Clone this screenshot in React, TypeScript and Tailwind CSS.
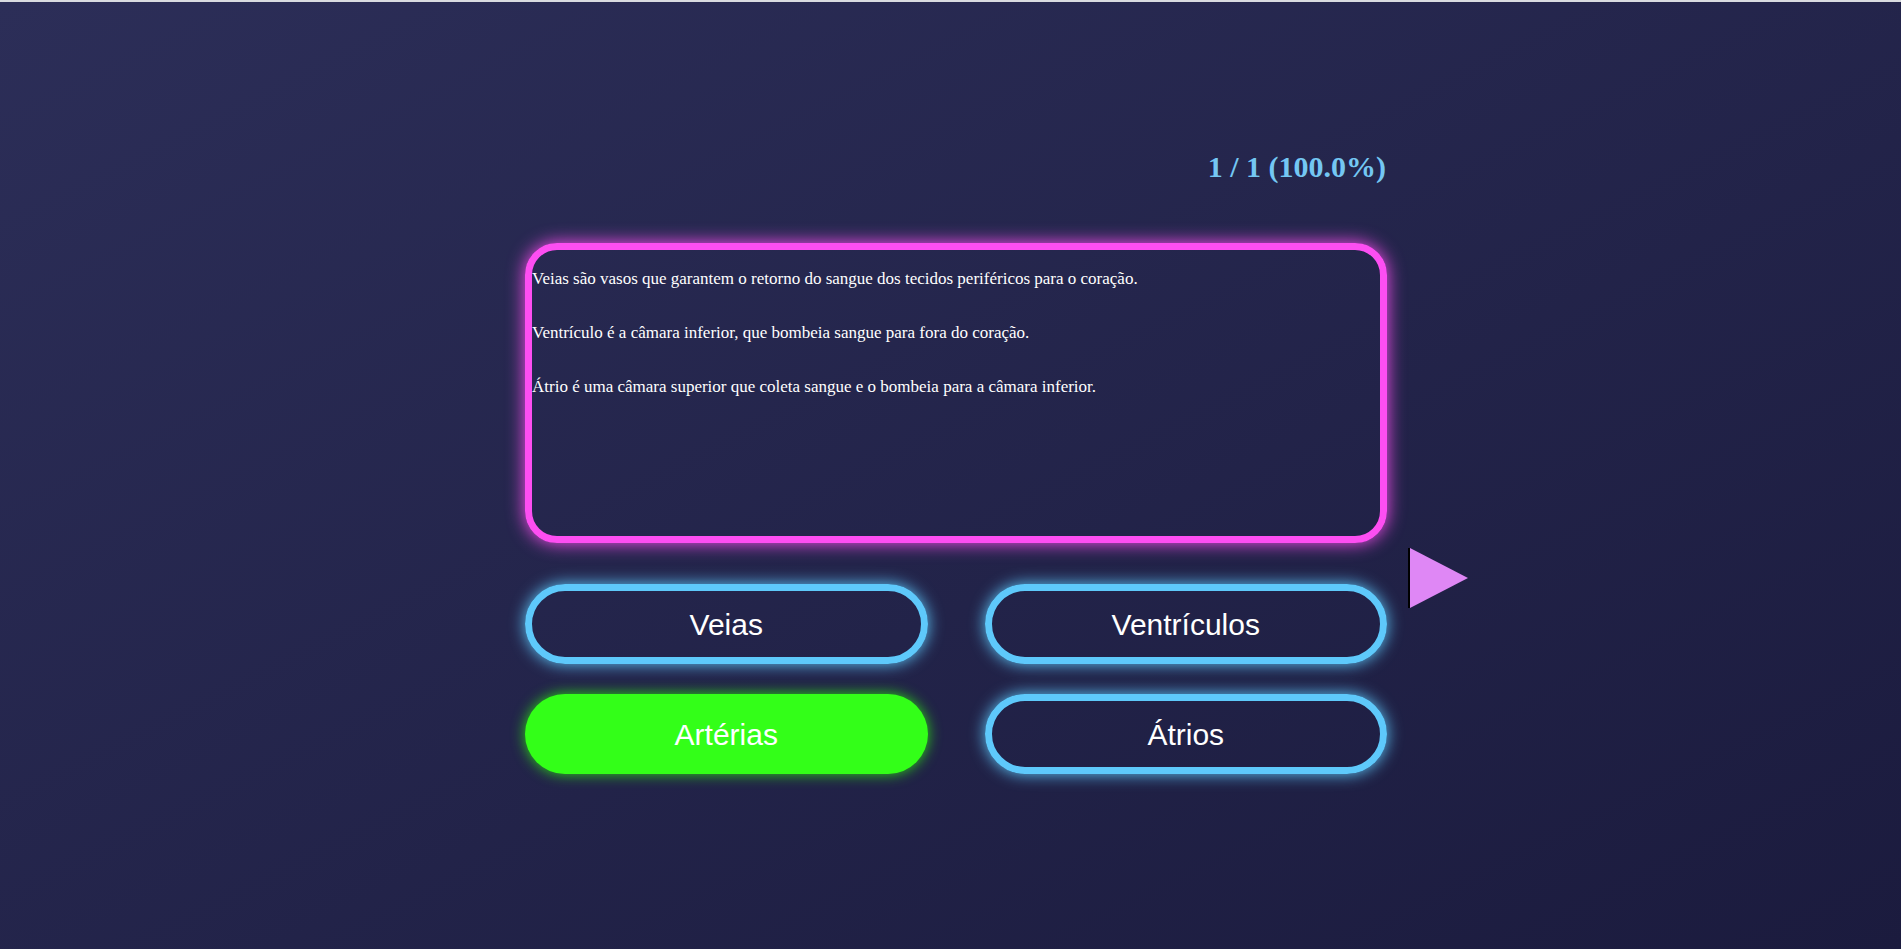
export default function App() {
    const answers = [
        { label: 'Veias', correct: false },
        { label: 'Ventrículos', correct: false },
        { label: 'Artérias', correct: true },
        { label: 'Átrios', correct: false },
    ];

    return (
        <div className="min-h-[949px] w-full border-t-2 border-[#d9dbe0] bg-gradient-to-br from-[#2c2e58] to-[#1b1b3e]">
            <div className="w-[873px] mx-auto pl-[11px] pt-[148px] pb-[120px]">
                <div className="text-right font-['Liberation_Serif',serif] font-bold text-[30px] leading-[34px] text-[#74c7f3] pr-[1px]">
                    1 / 1 (100.0%)
                </div>

                <div className="relative mt-[59px]">
                    <div className="h-[300px] rounded-[32px] border-[7px] border-[#fd4ef2] shadow-[0_0_18px_#fd4ef2] pt-[19px] flex flex-col gap-[35px] font-['Liberation_Serif',serif] text-[17px] leading-[19px] text-white">
                        <p>Veias são vasos que garantem o retorno do sangue dos tecidos periféricos para o coração.</p>
                        <p>Ventrículo é a câmara inferior, que bombeia sangue para fora do coração.</p>
                        <p>Átrio é uma câmara superior que coleta sangue e o bombeia para a câmara inferior.</p>
                    </div>

                    {/* next arrow */}
                    <button className="absolute left-[calc(100%+21px)] top-[calc(100%+5px)] w-[60px] h-[60px]">
                        <svg width="60" height="60" viewBox="0 0 60 60">
                            <polygon points="2,0 60,30 2,60" fill="#df87f5" />
                            <rect x="0" y="0" width="2" height="60" fill="#000" />
                        </svg>
                    </button>
                </div>

                <div className="mt-[41px] grid grid-cols-2 gap-x-[57px] gap-y-[30px]">
                    {answers.map((a) =>
                        a.correct ? (
                            <button
                                key={a.label}
                                className="h-[80px] rounded-full bg-[#33ff18] shadow-[0_0_14px_#2bd615] text-white text-[30px] font-['Liberation_Sans',Arial,sans-serif]"
                            >
                                {a.label}
                            </button>
                        ) : (
                            <button
                                key={a.label}
                                className="h-[80px] rounded-full border-[7px] border-[#5ec9fb] shadow-[0_0_16px_#5ec9fb] text-white text-[30px] font-['Liberation_Sans',Arial,sans-serif]"
                            >
                                {a.label}
                            </button>
                        )
                    )}
                </div>
            </div>
        </div>
    );
}
